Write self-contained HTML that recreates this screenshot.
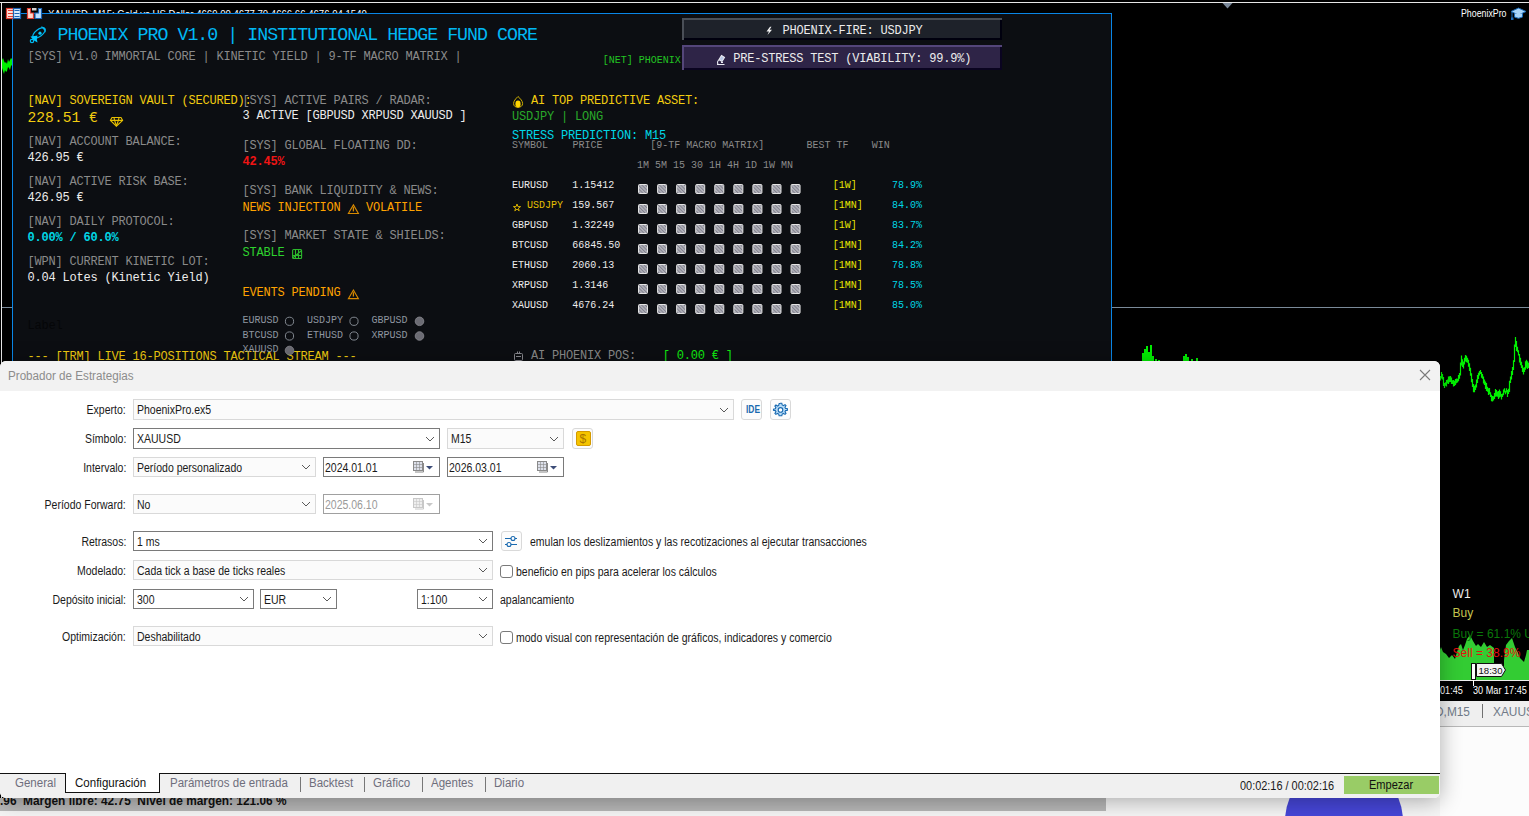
<!DOCTYPE html>
<html><head><meta charset="utf-8">
<style>
*{margin:0;padding:0;box-sizing:border-box}
html,body{width:1529px;height:816px;overflow:hidden;background:#000}
body{position:relative;font-family:"Liberation Sans",sans-serif}
.a{position:absolute;white-space:pre;line-height:normal}
.m{font-family:"Liberation Mono",monospace;font-size:12px;letter-spacing:-0.2px;margin-top:.8px}
.s{font-family:"Liberation Mono",monospace;font-size:10px;letter-spacing:0;margin-top:.5px}
.g{color:#8a8a8a}
.w{color:#ececec}
.y{color:#f2cc10}
.c{color:#00d7e6}
#panel{position:absolute;left:12px;top:13px;width:1100px;height:400px;background:#0c0e12;border:1px solid #0a86e6;overflow:hidden}
#panel .a{}
.btn{position:absolute;left:670px;width:320px;border-style:solid;border-width:2px}
.dlg{position:absolute;left:0;top:361px;width:1440px;height:437px;background:#fff;border-radius:6px;overflow:hidden;box-shadow:0 3px 22px rgba(0,0,0,.32)}
.lbl{position:absolute;font-size:12px;color:#1a1a1a;white-space:pre;transform:scaleX(.875);transform-origin:right top;text-align:right}
.txt{position:absolute;font-size:12px;color:#1a1a1a;white-space:pre;transform:scaleX(.875);transform-origin:left top}
.cb{position:absolute;border:1px solid #7a7a7a;background:#fff}
.cbl{border-color:#d4d4d4;background:#fbfbfb}
.chev{position:absolute;width:9px;height:5px}
</style></head><body>

<!-- chart frame lines -->
<div style="position:absolute;left:0;top:2px;width:1529px;height:1px;background:#e6e6e6"></div>
<div style="position:absolute;left:1px;top:2px;width:1px;height:800px;background:#e6e6e6"></div>
<div style="position:absolute;left:2px;top:307px;width:10px;height:1px;background:#7a8a99"></div>
<div style="position:absolute;left:1112px;top:307px;width:417px;height:1px;background:#7a8a99"></div>
<svg style="position:absolute;left:1222px;top:3px" width="11" height="6"><polygon points="0.5,0 10.5,0 5.5,5.5" fill="#7a8899"/></svg>

<!-- chart title (mostly hidden) -->
<div class="a" style="left:47.5px;top:7.5px;font-size:11px;color:#fff;transform:scaleX(.872);transform-origin:left top">XAUUSD, M15: Gold vs US Dollar 4669.00 4677.70 4666.66 4676.04 1540</div>

<!-- PANEL -->
<div id="panel"></div>
<div class="a" style="left:57.5px;top:24.8px;font-family:'Liberation Mono';font-size:18.3px;letter-spacing:-0.98px;color:#00b8f4">PHOENIX PRO V1.0 | INSTITUTIONAL HEDGE FUND CORE</div>
<div class="a m g" style="left:27.5px;top:48.9px;">[SYS] V1.0 IMMORTAL CORE | KINETIC YIELD | 9-TF MACRO MATRIX |</div>
<div class="a m y" style="left:27.5px;top:93.7px;">[NAV] SOVEREIGN VAULT (SECURED):</div>
<div class="a y" style="left:27.5px;top:110.3px;font-family:'Liberation Mono';font-size:14.67px">228.51 €</div>
<div class="a m g" style="left:27.5px;top:134.0px;">[NAV] ACCOUNT BALANCE:</div>
<div class="a m w" style="left:27.5px;top:149.8px">426.95 €</div>
<div class="a m g" style="left:27.5px;top:174.0px;">[NAV] ACTIVE RISK BASE:</div>
<div class="a m w" style="left:27.5px;top:190.0px">426.95 €</div>
<div class="a m g" style="left:27.5px;top:214.0px;">[NAV] DAILY PROTOCOL:</div>
<div class="a m c" style="left:27.5px;top:229.8px;font-weight:bold">0.00% / 60.0%</div>
<div class="a m g" style="left:27.5px;top:254.0px;">[WPN] CURRENT KINETIC LOT:</div>
<div class="a m w" style="left:27.5px;top:269.8px">0.04 Lotes (Kinetic Yield)</div>
<div class="a m " style="left:27.5px;top:318.6px;color:#050608">Label</div>
<div class="a m y" style="left:27.5px;top:349.0px;">--- [TRM] LIVE 16-POSITIONS TACTICAL STREAM ---</div>
<div class="a m g" style="left:242.5px;top:93.7px;">[SYS] ACTIVE PAIRS / RADAR:</div>
<div class="a m w" style="left:242.5px;top:108.6px">3 ACTIVE [GBPUSD XRPUSD XAUUSD ]</div>
<div class="a m g" style="left:242.5px;top:138.4px;">[SYS] GLOBAL FLOATING DD:</div>
<div class="a m " style="left:242.5px;top:154.1px;color:#f01414;font-weight:bold">42.45%</div>
<div class="a m g" style="left:242.5px;top:183.7px;">[SYS] BANK LIQUIDITY &amp; NEWS:</div>
<div class="a m " style="left:242.5px;top:200.2px;color:#ffa200">NEWS INJECTION</div>
<div class="a m " style="left:366px;top:200.2px;color:#ffa200">VOLATILE</div>
<div class="a m g" style="left:242.5px;top:228.4px;">[SYS] MARKET STATE &amp; SHIELDS:</div>
<div class="a m " style="left:242.5px;top:245.0px;color:#2ed22e">STABLE</div>
<div class="a m " style="left:242.5px;top:285.0px;color:#ffa200">EVENTS PENDING</div>
<div class="a s " style="left:242.5px;top:314.7px;color:#8f96a0">EURUSD</div>
<div class="a s " style="left:307.0px;top:314.7px;color:#8f96a0">USDJPY</div>
<div class="a s " style="left:371.5px;top:314.7px;color:#8f96a0">GBPUSD</div>
<div class="a s " style="left:242.5px;top:329.5px;color:#8f96a0">BTCUSD</div>
<div class="a s " style="left:307.0px;top:329.5px;color:#8f96a0">ETHUSD</div>
<div class="a s " style="left:371.5px;top:329.5px;color:#8f96a0">XRPUSD</div>
<div class="a s " style="left:242.5px;top:343.9px;color:#8f96a0">XAUUSD</div>
<div class="a m y" style="left:531px;top:93.7px;">AI TOP PREDICTIVE ASSET:</div>
<div class="a m " style="left:512px;top:109.4px;color:#2aa82a">USDJPY | LONG</div>
<div class="a m c" style="left:512px;top:128.5px;">STRESS PREDICTION: M15</div>
<div class="a s g" style="left:512px;top:139.4px;">SYMBOL</div>
<div class="a s g" style="left:572.5px;top:139.4px;">PRICE</div>
<div class="a s g" style="left:650.3px;top:139.4px;">[9-TF MACRO MATRIX]</div>
<div class="a s g" style="left:806.4px;top:139.4px;">BEST TF</div>
<div class="a s g" style="left:871.7px;top:139.4px;">WIN</div>
<div class="a s g" style="left:637px;top:159.0px;">1M 5M 15 30 1H 4H 1D 1W MN</div>
<div class="a s w" style="left:512px;top:179.7px;">EURUSD</div>
<div class="a s w" style="left:572.2px;top:179.7px;">1.15412</div>
<div class="a s " style="left:832.8px;top:179.7px;color:#e8e400">[1W]</div>
<div class="a s c" style="left:892px;top:179.7px;">78.9%</div>
<div class="a s " style="left:527px;top:199.7px;color:#e6c000">USDJPY</div>
<div class="a s w" style="left:572.2px;top:199.7px;">159.567</div>
<div class="a s " style="left:832.8px;top:199.7px;color:#e8e400">[1MN]</div>
<div class="a s c" style="left:892px;top:199.7px;">84.0%</div>
<div class="a s w" style="left:512px;top:219.7px;">GBPUSD</div>
<div class="a s w" style="left:572.2px;top:219.7px;">1.32249</div>
<div class="a s " style="left:832.8px;top:219.7px;color:#e8e400">[1W]</div>
<div class="a s c" style="left:892px;top:219.7px;">83.7%</div>
<div class="a s w" style="left:512px;top:239.7px;">BTCUSD</div>
<div class="a s w" style="left:572.2px;top:239.7px;">66845.50</div>
<div class="a s " style="left:832.8px;top:239.7px;color:#e8e400">[1MN]</div>
<div class="a s c" style="left:892px;top:239.7px;">84.2%</div>
<div class="a s w" style="left:512px;top:259.7px;">ETHUSD</div>
<div class="a s w" style="left:572.2px;top:259.7px;">2060.13</div>
<div class="a s " style="left:832.8px;top:259.7px;color:#e8e400">[1MN]</div>
<div class="a s c" style="left:892px;top:259.7px;">78.8%</div>
<div class="a s w" style="left:512px;top:279.7px;">XRPUSD</div>
<div class="a s w" style="left:572.2px;top:279.7px;">1.3146</div>
<div class="a s " style="left:832.8px;top:279.7px;color:#e8e400">[1MN]</div>
<div class="a s c" style="left:892px;top:279.7px;">78.5%</div>
<div class="a s w" style="left:512px;top:299.7px;">XAUUSD</div>
<div class="a s w" style="left:572.2px;top:299.7px;">4676.24</div>
<div class="a s " style="left:832.8px;top:299.7px;color:#e8e400">[1MN]</div>
<div class="a s c" style="left:892px;top:299.7px;">85.0%</div>
<svg style="position:absolute;left:0;top:0" width="1112" height="361"><defs><pattern id="hatch" width="2.5" height="2.5" patternUnits="userSpaceOnUse" patternTransform="rotate(-45)"><rect width="2.5" height="2.5" fill="#b4b4bc"/><rect width="1" height="2.5" fill="#80808c"/></pattern></defs><rect x="638.50" y="184.5" width="9" height="9" rx="1" fill="url(#hatch)" stroke="#e4e4e4" stroke-width="1"/><rect x="657.57" y="184.5" width="9" height="9" rx="1" fill="url(#hatch)" stroke="#e4e4e4" stroke-width="1"/><rect x="676.64" y="184.5" width="9" height="9" rx="1" fill="url(#hatch)" stroke="#e4e4e4" stroke-width="1"/><rect x="695.71" y="184.5" width="9" height="9" rx="1" fill="url(#hatch)" stroke="#e4e4e4" stroke-width="1"/><rect x="714.78" y="184.5" width="9" height="9" rx="1" fill="url(#hatch)" stroke="#e4e4e4" stroke-width="1"/><rect x="733.85" y="184.5" width="9" height="9" rx="1" fill="url(#hatch)" stroke="#e4e4e4" stroke-width="1"/><rect x="752.92" y="184.5" width="9" height="9" rx="1" fill="url(#hatch)" stroke="#e4e4e4" stroke-width="1"/><rect x="771.99" y="184.5" width="9" height="9" rx="1" fill="url(#hatch)" stroke="#e4e4e4" stroke-width="1"/><rect x="791.06" y="184.5" width="9" height="9" rx="1" fill="url(#hatch)" stroke="#e4e4e4" stroke-width="1"/><rect x="638.50" y="204.5" width="9" height="9" rx="1" fill="url(#hatch)" stroke="#e4e4e4" stroke-width="1"/><rect x="657.57" y="204.5" width="9" height="9" rx="1" fill="url(#hatch)" stroke="#e4e4e4" stroke-width="1"/><rect x="676.64" y="204.5" width="9" height="9" rx="1" fill="url(#hatch)" stroke="#e4e4e4" stroke-width="1"/><rect x="695.71" y="204.5" width="9" height="9" rx="1" fill="url(#hatch)" stroke="#e4e4e4" stroke-width="1"/><rect x="714.78" y="204.5" width="9" height="9" rx="1" fill="url(#hatch)" stroke="#e4e4e4" stroke-width="1"/><rect x="733.85" y="204.5" width="9" height="9" rx="1" fill="url(#hatch)" stroke="#e4e4e4" stroke-width="1"/><rect x="752.92" y="204.5" width="9" height="9" rx="1" fill="url(#hatch)" stroke="#e4e4e4" stroke-width="1"/><rect x="771.99" y="204.5" width="9" height="9" rx="1" fill="url(#hatch)" stroke="#e4e4e4" stroke-width="1"/><rect x="791.06" y="204.5" width="9" height="9" rx="1" fill="url(#hatch)" stroke="#e4e4e4" stroke-width="1"/><rect x="638.50" y="224.5" width="9" height="9" rx="1" fill="url(#hatch)" stroke="#e4e4e4" stroke-width="1"/><rect x="657.57" y="224.5" width="9" height="9" rx="1" fill="url(#hatch)" stroke="#e4e4e4" stroke-width="1"/><rect x="676.64" y="224.5" width="9" height="9" rx="1" fill="url(#hatch)" stroke="#e4e4e4" stroke-width="1"/><rect x="695.71" y="224.5" width="9" height="9" rx="1" fill="url(#hatch)" stroke="#e4e4e4" stroke-width="1"/><rect x="714.78" y="224.5" width="9" height="9" rx="1" fill="url(#hatch)" stroke="#e4e4e4" stroke-width="1"/><rect x="733.85" y="224.5" width="9" height="9" rx="1" fill="url(#hatch)" stroke="#e4e4e4" stroke-width="1"/><rect x="752.92" y="224.5" width="9" height="9" rx="1" fill="url(#hatch)" stroke="#e4e4e4" stroke-width="1"/><rect x="771.99" y="224.5" width="9" height="9" rx="1" fill="url(#hatch)" stroke="#e4e4e4" stroke-width="1"/><rect x="791.06" y="224.5" width="9" height="9" rx="1" fill="url(#hatch)" stroke="#e4e4e4" stroke-width="1"/><rect x="638.50" y="244.5" width="9" height="9" rx="1" fill="url(#hatch)" stroke="#e4e4e4" stroke-width="1"/><rect x="657.57" y="244.5" width="9" height="9" rx="1" fill="url(#hatch)" stroke="#e4e4e4" stroke-width="1"/><rect x="676.64" y="244.5" width="9" height="9" rx="1" fill="url(#hatch)" stroke="#e4e4e4" stroke-width="1"/><rect x="695.71" y="244.5" width="9" height="9" rx="1" fill="url(#hatch)" stroke="#e4e4e4" stroke-width="1"/><rect x="714.78" y="244.5" width="9" height="9" rx="1" fill="url(#hatch)" stroke="#e4e4e4" stroke-width="1"/><rect x="733.85" y="244.5" width="9" height="9" rx="1" fill="url(#hatch)" stroke="#e4e4e4" stroke-width="1"/><rect x="752.92" y="244.5" width="9" height="9" rx="1" fill="url(#hatch)" stroke="#e4e4e4" stroke-width="1"/><rect x="771.99" y="244.5" width="9" height="9" rx="1" fill="url(#hatch)" stroke="#e4e4e4" stroke-width="1"/><rect x="791.06" y="244.5" width="9" height="9" rx="1" fill="url(#hatch)" stroke="#e4e4e4" stroke-width="1"/><rect x="638.50" y="264.5" width="9" height="9" rx="1" fill="url(#hatch)" stroke="#e4e4e4" stroke-width="1"/><rect x="657.57" y="264.5" width="9" height="9" rx="1" fill="url(#hatch)" stroke="#e4e4e4" stroke-width="1"/><rect x="676.64" y="264.5" width="9" height="9" rx="1" fill="url(#hatch)" stroke="#e4e4e4" stroke-width="1"/><rect x="695.71" y="264.5" width="9" height="9" rx="1" fill="url(#hatch)" stroke="#e4e4e4" stroke-width="1"/><rect x="714.78" y="264.5" width="9" height="9" rx="1" fill="url(#hatch)" stroke="#e4e4e4" stroke-width="1"/><rect x="733.85" y="264.5" width="9" height="9" rx="1" fill="url(#hatch)" stroke="#e4e4e4" stroke-width="1"/><rect x="752.92" y="264.5" width="9" height="9" rx="1" fill="url(#hatch)" stroke="#e4e4e4" stroke-width="1"/><rect x="771.99" y="264.5" width="9" height="9" rx="1" fill="url(#hatch)" stroke="#e4e4e4" stroke-width="1"/><rect x="791.06" y="264.5" width="9" height="9" rx="1" fill="url(#hatch)" stroke="#e4e4e4" stroke-width="1"/><rect x="638.50" y="284.5" width="9" height="9" rx="1" fill="url(#hatch)" stroke="#e4e4e4" stroke-width="1"/><rect x="657.57" y="284.5" width="9" height="9" rx="1" fill="url(#hatch)" stroke="#e4e4e4" stroke-width="1"/><rect x="676.64" y="284.5" width="9" height="9" rx="1" fill="url(#hatch)" stroke="#e4e4e4" stroke-width="1"/><rect x="695.71" y="284.5" width="9" height="9" rx="1" fill="url(#hatch)" stroke="#e4e4e4" stroke-width="1"/><rect x="714.78" y="284.5" width="9" height="9" rx="1" fill="url(#hatch)" stroke="#e4e4e4" stroke-width="1"/><rect x="733.85" y="284.5" width="9" height="9" rx="1" fill="url(#hatch)" stroke="#e4e4e4" stroke-width="1"/><rect x="752.92" y="284.5" width="9" height="9" rx="1" fill="url(#hatch)" stroke="#e4e4e4" stroke-width="1"/><rect x="771.99" y="284.5" width="9" height="9" rx="1" fill="url(#hatch)" stroke="#e4e4e4" stroke-width="1"/><rect x="791.06" y="284.5" width="9" height="9" rx="1" fill="url(#hatch)" stroke="#e4e4e4" stroke-width="1"/><rect x="638.50" y="304.5" width="9" height="9" rx="1" fill="url(#hatch)" stroke="#e4e4e4" stroke-width="1"/><rect x="657.57" y="304.5" width="9" height="9" rx="1" fill="url(#hatch)" stroke="#e4e4e4" stroke-width="1"/><rect x="676.64" y="304.5" width="9" height="9" rx="1" fill="url(#hatch)" stroke="#e4e4e4" stroke-width="1"/><rect x="695.71" y="304.5" width="9" height="9" rx="1" fill="url(#hatch)" stroke="#e4e4e4" stroke-width="1"/><rect x="714.78" y="304.5" width="9" height="9" rx="1" fill="url(#hatch)" stroke="#e4e4e4" stroke-width="1"/><rect x="733.85" y="304.5" width="9" height="9" rx="1" fill="url(#hatch)" stroke="#e4e4e4" stroke-width="1"/><rect x="752.92" y="304.5" width="9" height="9" rx="1" fill="url(#hatch)" stroke="#e4e4e4" stroke-width="1"/><rect x="771.99" y="304.5" width="9" height="9" rx="1" fill="url(#hatch)" stroke="#e4e4e4" stroke-width="1"/><rect x="791.06" y="304.5" width="9" height="9" rx="1" fill="url(#hatch)" stroke="#e4e4e4" stroke-width="1"/></svg>
<div class="a m g" style="left:531px;top:348.5px;">AI PHOENIX POS:</div>
<div class="a m " style="left:662.8px;top:348.5px;color:#10ee10">[ 0.00 € ]</div>
<div class="a s " style="left:602.7px;top:54.5px;color:#22c422">[NET] PHOENIX</div>
<div style="position:absolute;left:682px;top:18px;width:320px;height:22px;background:#1e222a"></div><div style="position:absolute;left:682px;top:18px;width:320px;height:2px;background:#4a4f57"></div><div style="position:absolute;left:682px;top:18px;width:2px;height:22px;background:#4a4f57"></div><div style="position:absolute;left:1000px;top:20px;width:2px;height:20px;background:#00000e"></div><div style="position:absolute;left:684px;top:38px;width:318px;height:2px;background:#00000e"></div>
<div class="a m w" style="left:782.5px;top:22.9px;">PHOENIX-FIRE: USDJPY</div>
<div style="position:absolute;left:682px;top:45px;width:320px;height:25px;background:#2e2447"></div><div style="position:absolute;left:682px;top:45px;width:320px;height:2px;background:#54467a"></div><div style="position:absolute;left:682px;top:45px;width:2px;height:25px;background:#54467a"></div><div style="position:absolute;left:1000px;top:47px;width:2px;height:23px;background:#0a0420"></div><div style="position:absolute;left:684px;top:68px;width:318px;height:2px;background:#0a0420"></div>
<div class="a m w" style="left:733.2px;top:51.5px;">PRE-STRESS TEST (VIABILITY: 99.9%)</div>
<!-- /PANEL -->
<!-- ICONS -->
<svg style="position:absolute;left:0;top:0" width="1112" height="361">
<g transform="translate(24,22)" fill="none" stroke="#00b8f0" stroke-width="1.2"><ellipse cx="15" cy="11" rx="7.4" ry="3.5" transform="rotate(-37 15 11)"/><path d="M17.5 5 Q21 5.5 21 8.5 Q19.5 6 17.5 5Z" fill="#00c8ff"/><circle cx="16" cy="11.2" r="1.6" fill="#00c8ff" stroke="none"/><path d="M6.5 14.5L10.5 14L13.5 13.5L12.8 17L13.5 20.5L10 18.5L8.5 17Z" fill="#00c8ff" stroke="none"/><circle cx="8" cy="19" r="1.7"/></g>
<g fill="none" stroke="#e8c000" stroke-width="1.1"><path d="M112 117.5H121L122.6 120.4L116.4 126.2L110.4 120.4Z"/><path d="M110.6 120.4H122.4M114 117.6L114.6 120.4L116.4 126M119 117.6L118.4 120.4L116.4 126"/></g>
<g fill="none" stroke="#d88a00" stroke-width="1.1"><path d="M353.4 204.9L358.4 213.5H348.4Z"/><path d="M353.4 207.1V211.4" stroke-width="1.3"/></g>
<g fill="none" stroke="#d88a00" stroke-width="1.1"><path d="M353.4 290L358.4 298.6H348.4Z"/><path d="M353.4 292.2V296.5" stroke-width="1.3"/></g>
<g fill="none" stroke="#2cb82c" stroke-width="1.1"><rect x="292.6" y="249.5" width="9" height="9" rx="1"/><path d="M295.5 249.5V258.5M298.5 249.5V258.5M292.6 255.5H301.6M292.6 258L301.6 250.5"/></g>
<g><path d="M518 96.5C520.5 98.8 522.6 101 522.6 103.6C522.6 106 520.6 107.3 518 107.3C515.4 107.3 513.6 106 513.6 103.6C513.6 101 515.6 98.8 518 96.5Z" fill="none" stroke="#d0b000" stroke-width="1"/><ellipse cx="518" cy="104" rx="2.6" ry="3.4" fill="#ffd400"/></g>
<polygon points="517,204 517.9,206.6 520.6,206.6 518.4,208.2 519.2,210.8 517,209.2 514.8,210.8 515.6,208.2 513.4,206.6 516.1,206.6" fill="none" stroke="#d8b000" stroke-width="1"/>
<g fill="none" stroke="#8a8a90" stroke-width="1"><rect x="514.5" y="353.5" width="8" height="7" rx="1"/><path d="M516 356.5H521M517.5 351.5V353.5M519.5 351.5V353.5"/></g>
<polygon points="770,26.7 766.5,31.5 769,31.5 767.5,35 772,29.8 769.5,29.8 771.5,26.7" fill="#f0f0f0"/>
<g fill="none" stroke="#e8e8f0" stroke-width="1.1"><path d="M721.5 55.5L724.5 57.5L722 61.5L719 59.5Z" fill="#b8c8e8"/><path d="M717 64.5H724.5M718 64.5Q716.5 61 719.5 59.8M721 62.5H723"/></g>
<circle cx="289.5" cy="321.3" r="4.1" fill="none" stroke="#80868e" stroke-width="1"/><circle cx="354" cy="321.3" r="4.1" fill="none" stroke="#80868e" stroke-width="1"/><circle cx="419.5" cy="321.3" r="4.3" fill="#6c6c74" stroke="#8a8a90" stroke-width=".8"/><circle cx="289.5" cy="336" r="4.1" fill="none" stroke="#80868e" stroke-width="1"/><circle cx="354" cy="336" r="4.1" fill="none" stroke="#80868e" stroke-width="1"/><circle cx="419.5" cy="336" r="4.3" fill="#6c6c74" stroke="#8a8a90" stroke-width=".8"/><circle cx="289.5" cy="350.5" r="4.3" fill="#6c6c74" stroke="#8a8a90" stroke-width=".8"/>
</svg>
<svg style="position:absolute;left:0;top:0" width="60" height="25"><rect x="6.5" y="8.5" width="7" height="10" fill="#ffe0d8" stroke="#e03c30" stroke-width="1.2"/><rect x="13.5" y="8.5" width="7" height="10" fill="#d8ecff" stroke="#1a64b4" stroke-width="1.2"/><path d="M8 10.5H13M8 13.5H13M8 16.5H13" stroke="#e03c30" stroke-width="1"/><path d="M14.5 10.5H19.5M14.5 13.5H19.5M14.5 16.5H19.5" stroke="#1a64b4" stroke-width="1"/><path d="M27.5 8.5H30.5V13H33.5V18.5H27.5Z" fill="#ffd8cc" stroke="#e03c30" stroke-width="1.2"/><path d="M38.5 8.5H41.5V18.5H35V13H38.5Z" fill="#c0e0ff" stroke="#1a64b4" stroke-width="1.2"/><rect x="32" y="8" width="4.5" height="2.5" fill="#d0d0d0"/></svg>
<svg style="position:absolute;left:1510px;top:7px" width="17" height="14"><polygon points="8.5,1 16,4.5 8.5,8 1,4.5" fill="#a8d4f8" stroke="#1a6ab8" stroke-width="1"/><path d="M4.5 6.5V10Q8.5 12.5 12.5 10V6.5" fill="#a8d4f8" stroke="#1a6ab8" stroke-width="1"/><path d="M2 5V11" stroke="#1a6ab8" stroke-width="1"/><rect x="1" y="10.5" width="2.5" height="2.5" fill="#1a6ab8"/></svg>
<!-- /ICONS -->

<!-- top-right label -->
<div class="a" style="left:1460.5px;top:6.5px;font-size:11px;color:#fff;transform:scaleX(.8);transform-origin:left top">PhoenixPro</div>

<!-- EXTRA -->
<div style="position:absolute;left:1400px;top:701px;width:129px;height:115px;background:#fcfcfc"></div>
<div style="position:absolute;left:1400px;top:701px;width:129px;height:26px;background:#efefef;border-bottom:1px solid #b8b8b8"></div>
<div class="a" style="left:1435px;top:704.5px;font-size:12.5px;color:#707a88;transform:scaleX(.95);transform-origin:left top">D,M15</div>
<div style="position:absolute;left:1482px;top:704px;width:1px;height:14px;background:#707070"></div>
<div class="a" style="left:1493px;top:704.5px;font-size:12.5px;color:#707a88;transform:scaleX(.95);transform-origin:left top">XAUUSD</div>
<svg style="position:absolute;left:0;top:0" width="1529" height="816"><polygon points="1440,650 1441,647 1443,652 1446,654 1449,658 1452,655 1455,659 1457,652 1459,646 1461,644 1463,650 1465,645 1467,639 1470,635 1473,641 1476,646 1478,644 1481,647 1484,642 1487,647 1490,645 1494,648 1494,666 1504,666 1504,660 1506,645 1509,641 1512,638 1515,647 1518,653 1520,658 1524,662 1526,655 1527,650 1529,650 1529,680 1440,680" fill="#33cc33"/></svg>
<div style="position:absolute;left:1440px;top:680px;width:89px;height:1px;background:#f0f0f0"></div>
<div class="a" style="left:1452.6px;top:586.5px;font-size:12px;color:#f0f0f0">W1</div>
<div class="a" style="left:1452.6px;top:606px;font-size:12px;color:#c8c850">Buy</div>
<div class="a" style="left:1452.6px;top:626.5px;font-size:12px;color:#0a780a">Buy = 61.1% U</div>
<div class="a" style="left:1452.6px;top:646.3px;font-size:12px;color:#e81010">Sell = 38.9%</div>
<svg style="position:absolute;left:1470px;top:662px" width="40" height="26"><rect x="1.5" y="1.5" width="4" height="16" fill="#fff" stroke="#111" stroke-width="1"/><path d="M6.5 1.5H31.5L35.5 8L31.5 14.5H6.5Z" fill="#f4f4f4" stroke="#111" stroke-width="1"/><path d="M3.5 18V24" stroke="#fff" stroke-width="1"/></svg>
<div class="a" style="left:1478.5px;top:664.5px;font-size:9.6px;color:#111">18:30</div>
<div class="a" style="left:1440px;top:683.5px;font-size:10.5px;color:#fff;transform:scaleX(.87);transform-origin:left top">01:45</div>
<div class="a" style="left:1473px;top:683.5px;font-size:10.5px;color:#fff;transform:scaleX(.87);transform-origin:left top">30 Mar 17:45</div>
<svg style="position:absolute;left:0;top:0" width="1529" height="816"><path d="M1440.5 376.0V380.5M1441.5 372.0V378.5M1442.5 373.9V379.6M1443.5 377.0V386.0M1444.5 383.0V388.1M1445.5 382.3V385.8M1446.5 379.9V386.6M1447.5 379.4V383.4M1448.5 376.4V384.1M1449.5 376.3V382.2M1450.5 376.1V382.1M1451.5 377.4V383.9M1452.5 380.2V384.0M1453.5 380.1V386.4M1454.5 380.8V386.1M1455.5 379.1V385.1M1456.5 378.4V383.2M1457.5 378.8V382.6M1458.5 375.0V381.3M1459.5 373.1V378.8M1460.5 362.6V375.5M1461.5 355.4V365.5M1462.5 359.2V367.0M1463.5 361.4V368.6M1464.5 357.8V364.5M1465.5 355.1V361.5M1466.5 355.7V362.3M1467.5 357.8V362.7M1468.5 359.8V366.8M1469.5 363.2V371.0M1470.5 367.8V375.7M1471.5 373.2V382.3M1472.5 379.0V386.9M1473.5 384.0V392.3M1474.5 385.8V392.2M1475.5 384.6V389.9M1476.5 379.6V387.5M1477.5 375.0V383.0M1478.5 372.8V379.0M1479.5 370.9V375.5M1480.5 370.0V373.9M1481.5 372.0V377.8M1482.5 374.0V378.7M1483.5 376.5V383.6M1484.5 379.5V385.1M1485.5 381.6V388.9M1486.5 383.0V391.1M1487.5 386.7V391.7M1488.5 388.2V394.9M1489.5 387.9V394.2M1490.5 392.2V396.9M1491.5 394.8V401.2M1492.5 396.0V401.5M1493.5 396.2V400.5M1494.5 393.1V398.9M1495.5 388.9V396.8M1496.5 390.0V396.4M1497.5 391.5V396.7M1498.5 391.1V399.1M1499.5 389.6V397.6M1500.5 391.3V396.7M1501.5 394.0V399.4M1502.5 393.6V397.0M1503.5 389.6V395.2M1504.5 388.2V392.4M1505.5 390.7V394.2M1506.5 388.2V392.6M1507.5 390.0V397.1M1508.5 388.7V393.9M1509.5 380.7V392.0M1510.5 376.4V383.0M1511.5 371.0V379.5M1512.5 367.1V375.0M1513.5 360.2V370.0M1514.5 344.5V362.0M1515.5 337.0V347.0M1516.5 341.0V351.1M1517.5 346.8V352.2M1518.5 350.2V355.6M1519.5 354.0V362.4M1520.5 357.7V365.3M1521.5 361.8V367.9M1522.5 365.2V372.1M1523.5 367.7V374.6M1524.5 367.3V371.9M1525.5 361.3V369.8M1526.5 359.7V367.7M1527.5 361.3V369.0M1528.5 362.8V368.1M1529.5 361.4V365.6" stroke="#00f000" stroke-width="1.2"/><path d="M1143 361V353M1145 361V349M1147 361V346M1149 361V352M1151 361V345M1153 361V356M1156 361V359M1159 361V360M1184 361V356M1186 361V354M1188 361V357M1192 361V359M1197 361V358" stroke="#00f000" stroke-width="2"/></svg>
<div style="position:absolute;left:0;top:798px;width:1440px;height:18px;background:#f6f6f6"></div>
<div style="position:absolute;left:0;top:798px;width:1106px;height:13px;background:#b8b8b8"></div>
<div class="a" style="left:0;top:794px;font-size:12px;font-weight:bold;color:#111;transform:scaleX(.99);transform-origin:left top">.96  Margen libre: 42.75  Nivel de margen: 121.06 %</div>
<div style="position:absolute;left:1285px;top:762px;width:118px;height:118px;border-radius:50%;background:#4646d8"></div>
<svg style="position:absolute;left:0;top:0" width="14" height="80"><polygon points="2,60 3,58 4,61 5,63 6,62 7,64 8,59 9,62 10,60 11,58 12,59 12,65 11,66 10,70 9,68 8,67 7,71 6,72 5,70 4,74 3,71 2,68" fill="#00f000"/></svg>
<!-- /EXTRA -->
<!-- DIALOG -->
<div class="dlg">
<div style="position:absolute;left:0;top:0;width:1440px;height:30px;background:#f2f2f2"></div>
<div class="a" style="left:7.5px;top:7.7px;font-size:12px;color:#8c8c8c;transform:scaleX(0.97);transform-origin:left top">Probador de Estrategias</div>
<svg style="position:absolute;left:1419px;top:8px" width="12" height="12"><path d="M1 1L11 11M11 1L1 11" stroke="#7a7a7a" stroke-width="1.1"/></svg>
<div class="lbl" style="right:1314px;top:42.1px">Experto:</div>
<div class="lbl" style="right:1314px;top:70.9px">Símbolo:</div>
<div class="lbl" style="right:1314px;top:99.8px">Intervalo:</div>
<div class="lbl" style="right:1314px;top:136.5px">Período Forward:</div>
<div class="lbl" style="right:1314px;top:174.1px">Retrasos:</div>
<div class="lbl" style="right:1314px;top:203.1px">Modelado:</div>
<div class="lbl" style="right:1314px;top:231.5px">Depósito inicial:</div>
<div class="lbl" style="right:1314px;top:269.1px">Optimización:</div>
<div style="position:absolute;left:133px;top:38px;width:601px;height:21px;border:1px solid #d9d9d9;background:#fbfbfb;border-radius:0px"></div>
<div class="a" style="left:136.5px;top:42.1px;font-size:12px;color:#1a1a1a;transform:scaleX(0.875);transform-origin:left top">PhoenixPro.ex5</div>
<svg style="position:absolute;left:719px;top:45.5px" width="10" height="6"><path d="M1 1L5 5L9 1" fill="none" stroke="#5a5a5a" stroke-width="1"/></svg>
<div style="position:absolute;left:741px;top:38px;width:21px;height:21px;border:1px solid #d9d9d9;background:#fcfcfc;border-radius:3px"></div>
<div class="a" style="left:746px;top:43px;font-family:'Liberation Sans';font-weight:bold;font-size:10px;color:#1a6ab0;transform:scaleX(.84);transform-origin:left top">IDE</div>
<div style="position:absolute;left:770px;top:38px;width:21px;height:21px;border:1px solid #d9d9d9;background:#fcfcfc;border-radius:3px"></div>
<svg style="position:absolute;left:772px;top:40px" width="17" height="17" viewBox="0 0 17 17"><path d="M8.5 2.2l1.3 0 .4 1.8 1.2.6 1.6-1 1 1-1 1.6.6 1.2 1.8.4v1.4l-1.8.4-.6 1.2 1 1.6-1 1-1.6-1-1.2.6-.4 1.8H7.1l-.4-1.8-1.2-.6-1.6 1-1-1 1-1.6-.6-1.2-1.8-.4V8.2l1.8-.4.6-1.2-1-1.6 1-1 1.6 1 1.2-.6.4-1.8z" fill="#b8dcf8" stroke="#1a6ab0" stroke-width="1.1"/><circle cx="8.5" cy="8.9" r="2.3" fill="#fff" stroke="#1a6ab0" stroke-width="1.1"/></svg>
<div style="position:absolute;left:133px;top:67px;width:307px;height:21px;border:1px solid #7a7a7a;background:#fff;border-radius:0px"></div>
<div class="a" style="left:136.5px;top:71.1px;font-size:12px;color:#1a1a1a;transform:scaleX(0.875);transform-origin:left top">XAUUSD</div>
<svg style="position:absolute;left:425px;top:74.5px" width="10" height="6"><path d="M1 1L5 5L9 1" fill="none" stroke="#5a5a5a" stroke-width="1"/></svg>
<div style="position:absolute;left:447px;top:67px;width:117px;height:21px;border:1px solid #d9d9d9;background:#fbfbfb;border-radius:0px"></div>
<div class="a" style="left:450.5px;top:71.1px;font-size:12px;color:#1a1a1a;transform:scaleX(0.875);transform-origin:left top">M15</div>
<svg style="position:absolute;left:549px;top:74.5px" width="10" height="6"><path d="M1 1L5 5L9 1" fill="none" stroke="#5a5a5a" stroke-width="1"/></svg>
<div style="position:absolute;left:572px;top:67px;width:21px;height:21px;border:1px solid #d9d9d9;background:#fcfcfc;border-radius:3px"></div>
<div style="position:absolute;left:576px;top:70px;width:15px;height:15px;background:#f5c400;border:1px solid #d49a00;border-radius:2px"></div>
<div class="a" style="left:579.5px;top:70.5px;font-size:12px;color:#a87400">$</div>
<div style="position:absolute;left:133px;top:96px;width:183px;height:20px;border:1px solid #d9d9d9;background:#fbfbfb;border-radius:0px"></div>
<div class="a" style="left:136.5px;top:100.1px;font-size:12px;color:#1a1a1a;transform:scaleX(0.875);transform-origin:left top">Período personalizado</div>
<svg style="position:absolute;left:301px;top:103.0px" width="10" height="6"><path d="M1 1L5 5L9 1" fill="none" stroke="#5a5a5a" stroke-width="1"/></svg>
<div style="position:absolute;left:323px;top:96px;width:117px;height:20px;border:1px solid #7a7a7a;background:#fff;border-radius:0px"></div>
<div class="a" style="left:325px;top:100.1px;font-size:12px;color:#1a1a1a;transform:scaleX(0.875);transform-origin:left top">2024.01.01</div>
<svg style="position:absolute;left:413px;top:100px" width="22" height="12"><rect x="0.5" y="0.5" width="9" height="9" fill="#dde0ea" stroke="#8a8a8a"/><path d="M3.5 1V10M6.5 1V10M1 3.5H10M1 6.5H10" stroke="#8a8a8a" stroke-width=".6"/><path d="M10.5 2V11H2" fill="none" stroke="#8a8a8a" stroke-width="1"/><polygon points="13,5 20,5 16.5,8.5" fill="#3d4d78"/></svg>
<div style="position:absolute;left:447px;top:96px;width:117px;height:20px;border:1px solid #7a7a7a;background:#fff;border-radius:0px"></div>
<div class="a" style="left:449px;top:100.1px;font-size:12px;color:#1a1a1a;transform:scaleX(0.875);transform-origin:left top">2026.03.01</div>
<svg style="position:absolute;left:537px;top:100px" width="22" height="12"><rect x="0.5" y="0.5" width="9" height="9" fill="#dde0ea" stroke="#8a8a8a"/><path d="M3.5 1V10M6.5 1V10M1 3.5H10M1 6.5H10" stroke="#8a8a8a" stroke-width=".6"/><path d="M10.5 2V11H2" fill="none" stroke="#8a8a8a" stroke-width="1"/><polygon points="13,5 20,5 16.5,8.5" fill="#3d4d78"/></svg>
<div style="position:absolute;left:133px;top:133px;width:183px;height:20px;border:1px solid #d9d9d9;background:#fbfbfb;border-radius:0px"></div>
<div class="a" style="left:136.5px;top:137.1px;font-size:12px;color:#1a1a1a;transform:scaleX(0.875);transform-origin:left top">No</div>
<svg style="position:absolute;left:301px;top:140.0px" width="10" height="6"><path d="M1 1L5 5L9 1" fill="none" stroke="#5a5a5a" stroke-width="1"/></svg>
<div style="position:absolute;left:323px;top:133px;width:117px;height:20px;border:1px solid #a0a0a0;background:#fff;border-radius:0px"></div>
<div class="a" style="left:325px;top:137.1px;font-size:12px;color:#9a9a9a;transform:scaleX(0.875);transform-origin:left top">2025.06.10</div>
<svg style="position:absolute;left:413px;top:137px" width="22" height="12"><rect x="0.5" y="0.5" width="9" height="9" fill="#eeeeee" stroke="#c8c8c8"/><path d="M3.5 1V10M6.5 1V10M1 3.5H10M1 6.5H10" stroke="#c8c8c8" stroke-width=".6"/><path d="M10.5 2V11H2" fill="none" stroke="#c8c8c8" stroke-width="1"/><polygon points="13,5 20,5 16.5,8.5" fill="#c8c8c8"/></svg>
<div style="position:absolute;left:133px;top:170px;width:360px;height:20px;border:1px solid #7a7a7a;background:#fff;border-radius:0px"></div>
<div class="a" style="left:136.5px;top:174.1px;font-size:12px;color:#1a1a1a;transform:scaleX(0.875);transform-origin:left top">1 ms</div>
<svg style="position:absolute;left:478px;top:177.0px" width="10" height="6"><path d="M1 1L5 5L9 1" fill="none" stroke="#5a5a5a" stroke-width="1"/></svg>
<div style="position:absolute;left:501px;top:170px;width:21px;height:20px;border:1px solid #d9d9d9;background:#fcfcfc;border-radius:3px"></div>
<svg style="position:absolute;left:503px;top:172px" width="16" height="16"><path d="M2 5.5H14M2 11.5H14" stroke="#1a6ab0" stroke-width="1.1"/><circle cx="10" cy="5.5" r="2" fill="#fff" stroke="#1a6ab0" stroke-width="1.1"/><circle cx="6" cy="11.5" r="2" fill="#fff" stroke="#1a6ab0" stroke-width="1.1"/></svg>
<div class="a" style="left:529.5px;top:174.1px;font-size:12px;color:#1a1a1a;transform:scaleX(0.875);transform-origin:left top">emulan los deslizamientos y las recotizaciones al ejecutar transacciones</div>
<div style="position:absolute;left:133px;top:199px;width:360px;height:20px;border:1px solid #d9d9d9;background:#fbfbfb;border-radius:0px"></div>
<div class="a" style="left:136.5px;top:203.1px;font-size:12px;color:#1a1a1a;transform:scaleX(0.875);transform-origin:left top">Cada tick a base de ticks reales</div>
<svg style="position:absolute;left:478px;top:206.0px" width="10" height="6"><path d="M1 1L5 5L9 1" fill="none" stroke="#5a5a5a" stroke-width="1"/></svg>
<div style="position:absolute;left:500px;top:204px;width:13px;height:13px;border:1px solid #7a7a7a;border-radius:3px;background:#fff"></div>
<div class="a" style="left:515.7px;top:203.9px;font-size:12px;color:#1a1a1a;transform:scaleX(0.875);transform-origin:left top">beneficio en pips para acelerar los cálculos</div>
<div style="position:absolute;left:133px;top:228px;width:121px;height:20px;border:1px solid #7a7a7a;background:#fff;border-radius:0px"></div>
<div class="a" style="left:136.5px;top:232.1px;font-size:12px;color:#1a1a1a;transform:scaleX(0.875);transform-origin:left top">300</div>
<svg style="position:absolute;left:239px;top:235.0px" width="10" height="6"><path d="M1 1L5 5L9 1" fill="none" stroke="#5a5a5a" stroke-width="1"/></svg>
<div style="position:absolute;left:260px;top:228px;width:77px;height:20px;border:1px solid #7a7a7a;background:#fff;border-radius:0px"></div>
<div class="a" style="left:263.5px;top:232.1px;font-size:12px;color:#1a1a1a;transform:scaleX(0.875);transform-origin:left top">EUR</div>
<svg style="position:absolute;left:322px;top:235.0px" width="10" height="6"><path d="M1 1L5 5L9 1" fill="none" stroke="#5a5a5a" stroke-width="1"/></svg>
<div style="position:absolute;left:417px;top:228px;width:76px;height:20px;border:1px solid #7a7a7a;background:#fff;border-radius:0px"></div>
<div class="a" style="left:420.5px;top:232.1px;font-size:12px;color:#1a1a1a;transform:scaleX(0.875);transform-origin:left top">1:100</div>
<svg style="position:absolute;left:478px;top:235.0px" width="10" height="6"><path d="M1 1L5 5L9 1" fill="none" stroke="#5a5a5a" stroke-width="1"/></svg>
<div class="a" style="left:499.7px;top:231.9px;font-size:12px;color:#1a1a1a;transform:scaleX(0.875);transform-origin:left top">apalancamiento</div>
<div style="position:absolute;left:133px;top:265px;width:360px;height:20px;border:1px solid #d9d9d9;background:#fbfbfb;border-radius:0px"></div>
<div class="a" style="left:136.5px;top:269.1px;font-size:12px;color:#1a1a1a;transform:scaleX(0.875);transform-origin:left top">Deshabilitado</div>
<svg style="position:absolute;left:478px;top:272.0px" width="10" height="6"><path d="M1 1L5 5L9 1" fill="none" stroke="#5a5a5a" stroke-width="1"/></svg>
<div style="position:absolute;left:500px;top:270px;width:13px;height:13px;border:1px solid #7a7a7a;border-radius:3px;background:#fff"></div>
<div class="a" style="left:515.7px;top:270.1px;font-size:12px;color:#1a1a1a;transform:scaleX(0.875);transform-origin:left top">modo visual con representación de gráficos, indicadores y comercio</div>
<div style="position:absolute;left:0;top:412px;width:1440px;height:25px;background:#f0f0f0;border-top:1px solid #111"></div>
<div style="position:absolute;left:65px;top:412px;width:95px;height:20px;background:#fff;border:1px solid #111;border-top:none"></div>
<div class="a" style="left:14.5px;top:414.7px;font-size:12px;color:#6e6e7c;transform:scaleX(0.96);transform-origin:left top">General</div>
<div class="a" style="left:74.6px;top:414.7px;font-size:12px;color:#111;transform:scaleX(0.96);transform-origin:left top">Configuración</div>
<div class="a" style="left:170.4px;top:414.7px;font-size:12px;color:#6e6e7c;transform:scaleX(0.96);transform-origin:left top">Parámetros de entrada</div>
<div class="a" style="left:309px;top:414.7px;font-size:12px;color:#6e6e7c;transform:scaleX(0.96);transform-origin:left top">Backtest</div>
<div class="a" style="left:373px;top:414.7px;font-size:12px;color:#6e6e7c;transform:scaleX(0.96);transform-origin:left top">Gráfico</div>
<div class="a" style="left:431px;top:414.7px;font-size:12px;color:#6e6e7c;transform:scaleX(0.96);transform-origin:left top">Agentes</div>
<div class="a" style="left:494px;top:414.7px;font-size:12px;color:#6e6e7c;transform:scaleX(0.96);transform-origin:left top">Diario</div>
<div style="position:absolute;left:300px;top:416px;width:1px;height:15px;background:#777"></div>
<div style="position:absolute;left:364px;top:416px;width:1px;height:15px;background:#777"></div>
<div style="position:absolute;left:422px;top:416px;width:1px;height:15px;background:#777"></div>
<div style="position:absolute;left:485px;top:416px;width:1px;height:15px;background:#777"></div>
<div class="a" style="left:1240.2px;top:417.7px;font-size:12px;color:#1a1a1a;transform:scaleX(0.91);transform-origin:left top">00:02:16 / 00:02:16</div>
<div style="position:absolute;left:1344px;top:415px;width:95px;height:18px;background:#99cc66"></div>
<div class="a" style="left:1369.4px;top:417.1px;font-size:12px;color:#111;transform:scaleX(0.92);transform-origin:left top">Empezar</div>
</div>
<!-- /DIALOG -->
</body></html>
